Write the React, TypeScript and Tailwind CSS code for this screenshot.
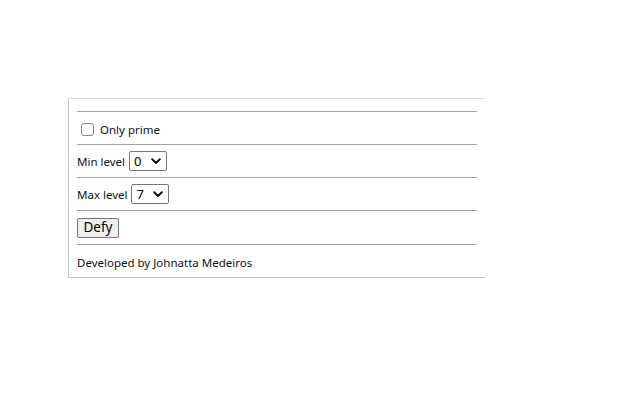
import React from "react";

function Chevron() {
  return (
    <svg width="10" height="7" viewBox="0 0 10 7" fill="none">
      <path d="M1.2 1.3 L5 5 L8.8 1.3" stroke="#111" strokeWidth="2" strokeLinecap="round" strokeLinejoin="round" />
    </svg>
  );
}

function FakeSelect({ value }: { value: string }) {
  return (
    <div className="ml-[4px] flex h-[20px] w-[38px] items-center justify-between rounded-[2px] border border-[#767676] bg-white pl-[4px] pr-[5px] text-[13px] leading-none text-black">
      <span>{value}</span>
      <Chevron />
    </div>
  );
}

function Hr() {
  return <div className="h-px w-full bg-[#a3a3a3]" />;
}

export default function App() {
  return (
    <div className="min-h-[400px] w-[640px] bg-white pt-[98px] pl-[68px] text-[#111]" style={{ fontFamily: '"Noto Sans", "Open Sans", sans-serif' }}>
      <div className="h-[180px] w-[417px] border-t border-l border-b border-t-[#dcdcdc] border-l-[#c4c4c4] border-b-[#c4c4c4] px-[8px] pt-[12px]">
        <Hr />
        <div className="flex h-[32px] items-center pt-[2px]">
          <span className="ml-[4px] inline-block h-[13px] w-[13px] rounded-[3px] border border-[#858585] bg-white" />
          <span className="ml-[6px] pt-[2px] text-[11.5px] leading-none">Only prime</span>
        </div>
        <Hr />
        <div className="flex h-[32px] items-center">
          <span className="pt-[2px] text-[11.5px] leading-none">Min level</span>
          <FakeSelect value="0" />
        </div>
        <Hr />
        <div className="flex h-[32px] items-center">
          <span className="pt-[2px] text-[11.5px] leading-none">Max level</span>
          <FakeSelect value="7" />
        </div>
        <Hr />
        <div className="flex h-[33px] items-center pt-[1px]">
          <div className="flex h-[20px] w-[42px] items-center justify-center rounded-[2px] border border-[#767676] bg-[#efefef] text-[13.5px] leading-none text-black">
            Defy
          </div>
        </div>
        <Hr />
        <div className="flex h-[32px] items-center pt-[3px]">
          <span className="text-[11.5px] leading-none">Developed by Johnatta Medeiros</span>
        </div>
      </div>
    </div>
  );
}
